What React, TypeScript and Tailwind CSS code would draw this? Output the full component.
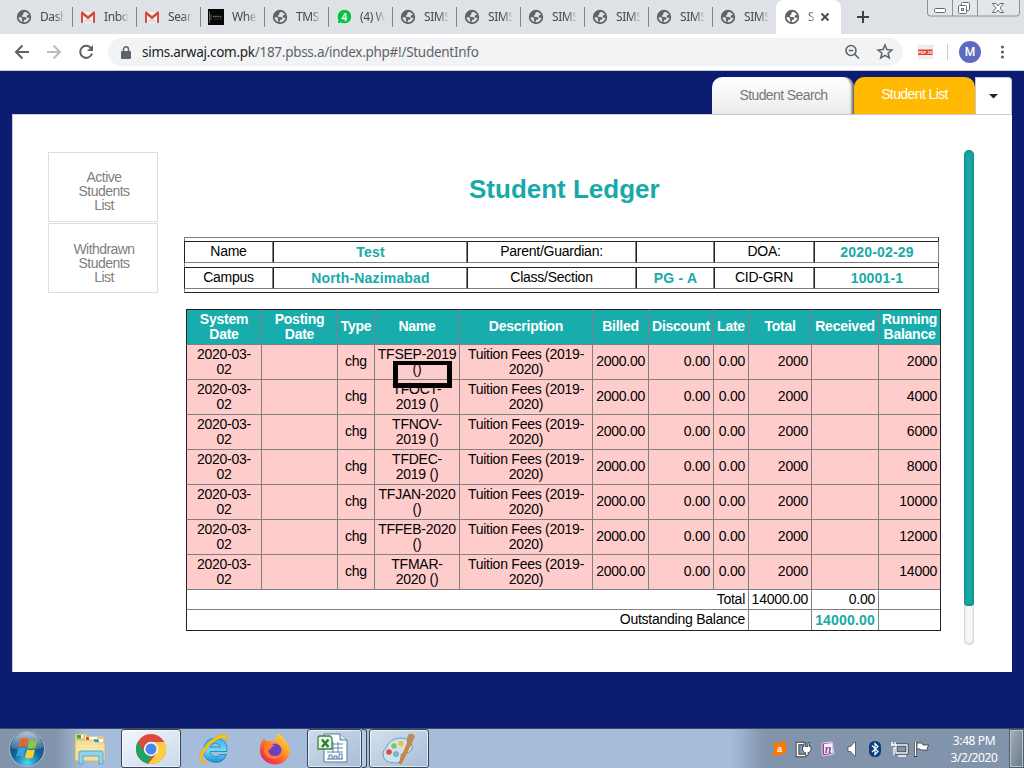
import React from "react";

const chrome = "font-['Noto_Sans','Open_Sans',sans-serif]";

function Globe({ land = "#dee1e6" }: { land?: string }) {
  return (
    <svg width="16" height="16" viewBox="0 0 16 16" className="shrink-0">
      <circle cx="8" cy="8" r="7.200" fill="#5f6368" />
      <path d="M8.800 2.700 7.200 4.200l.2 1.300-1.900 1.600 1.400.9h2.500l1.100 1.200-.7 1.200-1.800.6-.4 2.300c3.300.1 5.600-2.200 5.800-4.800l-1.300.6-1.700-1.400.6-1.500 1.900-.3C12 4.300 10.700 3 8.800 2.700Z" fill={land} />
      <path d="M2.600 8 5 8.300l1.400 1.400-.6 1.200.9 2.200C4.200 12.600 2.600 10.500 2.600 8Z" fill={land} />
    </svg>
  );
}

function Gmail() {
  return (
    <svg width="16" height="16" viewBox="0 0 16 16" className="shrink-0">
      <path d="M1 3h14v11H1Z" fill="#f2f2f2" />
      <path d="M3 13 8 8l5 5Z" fill="#dcdcdc" />
      <path d="M1 3.500V14h2V6.200l5 4 5-4V14h2V3.500c0-1-1-1.300-1.800-.7L8 7 2.800 2.800C2 2.200 1 2.500 1 3.500Z" fill="#d54b3d" />
    </svg>
  );
}

function WhatsApp() {
  return (
    <svg width="16" height="16" viewBox="0 0 16 16" className="shrink-0">
      <path d="m1 15 1-4A7.300 7.300 0 1 1 5 14Z" fill="#0dc143" stroke="#fff" strokeWidth=".8" />
      <text x="8.300" y="12" textAnchor="middle" fontSize="10" fontWeight="700" fontFamily="Liberation Sans, sans-serif" fill="#fff">4</text>
    </svg>
  );
}

function DarkThumb() {
  return (
    <svg width="16" height="16" viewBox="0 0 16 16" className="shrink-0">
      <path d="M0 0h16v16H0Z" fill="#050505" />
      <path d="M1.500 2v12M3 5v6" stroke="#777" strokeWidth=".8" />
      <path d="M5 7.500h9" stroke="#777" strokeWidth="1.500" strokeDasharray="1.500 .7" />
      <path d="M6 10h8" stroke="#444" strokeDasharray="1 .5" />
    </svg>
  );
}

const tabs = [
  { icon: "globe", text: "Dash" },
  { icon: "gmail", text: "Inbo" },
  { icon: "gmail", text: "Sear" },
  { icon: "dark", text: "Whe" },
  { icon: "globe", text: "TMS" },
  { icon: "wa", text: "(4) W" },
  { icon: "globe", text: "SIMS" },
  { icon: "globe", text: "SIMS" },
  { icon: "globe", text: "SIMS" },
  { icon: "globe", text: "SIMS" },
  { icon: "globe", text: "SIMS" },
  { icon: "globe", text: "SIMS" },
];

function TabIcon({ kind }: { kind: string }) {
  if (kind === "gmail") return <Gmail />;
  if (kind === "wa") return <WhatsApp />;
  if (kind === "dark") return <DarkThumb />;
  return <Globe />;
}

function TabStrip() {
  return (
    <div className={`flex h-[34px] bg-[#dee1e6] pl-2 text-[12px] text-[#45484c] ${chrome}`}>
      {tabs.map((t, i) => (
        <div key={i} className="flex w-16 shrink-0 items-center pl-2">
          <TabIcon kind={t.icon} />
          <div className="ml-2 w-[25px] overflow-hidden whitespace-nowrap tracking-[-0.4px] [mask-image:linear-gradient(to_right,#000_60%,transparent)]">{t.text}</div>
          {i < 11 && <div className="-mr-px ml-auto h-5 w-px bg-[#80858b]" />}
        </div>
      ))}
      <div className="flex w-[65px] shrink-0 items-center rounded-t-lg bg-white pl-2">
        <Globe land="#fff" />
        <div className="ml-2 w-[6px] overflow-hidden whitespace-nowrap [mask-image:linear-gradient(to_right,#000,#0006)]">S</div>
        <svg width="10" height="10" viewBox="0 0 10 10" className="ml-[6px]"><path d="m1.500 1.500 7 7m0-7-7 7" stroke="#45484c" strokeWidth="1.800" /></svg>
      </div>
      <div className="flex w-11 items-center justify-center">
        <svg width="14" height="14" viewBox="0 0 14 14"><path d="M7 1v12M1 7h12" stroke="#3c4043" strokeWidth="2" /></svg>
      </div>
      <svg width="94" height="18" viewBox="0 0 94 18" className="ml-[42px] shrink-0">
        <path d="M.5-1v14q0 3 3 3h86q3 0 3-3V-1" fill="#e3e6ea" stroke="#8b9096" />
        <path d="M25.500 0v16M50.500 0v16" stroke="#8b9096" />
        <rect x="7.500" y="8.500" width="11" height="4" rx="1" fill="#fff" stroke="#666b73" />
        <rect x="34.500" y="2.500" width="8" height="8" rx="1" fill="#fff" stroke="#666b73" />
        <rect x="31.500" y="5.500" width="8" height="8" rx="1" fill="#fff" stroke="#666b73" />
        <rect x="34.500" y="8.500" width="2" height="2" fill="#fff" stroke="#666b73" />
        <path d="M65.500 3.500h3.500l2 2.500 2-2.500h3.500L73 8l3.500 4.500H73L71 10l-2 2.500h-3.500L69 8Z" fill="#fff" stroke="#666b73" />
      </svg>
    </div>
  );
}

function Toolbar() {
  return (
    <div className={`flex h-[37px] items-center border-b border-[#c9ccd1] bg-white ${chrome}`}>
      <svg width="108" height="36" viewBox="0 0 108 36" className="shrink-0" fill="none" strokeWidth="2">
        <path d="M29 18H16m6.500-6.500L16 18l6.500 6.500" stroke="#5f6368" />
        <path d="M47 18h13m-6.500-6.500L60 18l-6.500 6.500" stroke="#babcbe" />
        <path d="M91 14.200A6 6 0 1 0 92 19.500" stroke="#5f6368" />
        <path d="M93 11v6h-6Z" fill="#5f6368" />
      </svg>
      <div className="flex h-7 w-[795px] shrink-0 items-center rounded-full bg-[#f1f3f4]">
        <svg width="10" height="13" viewBox="0 0 10 13" className="ml-[13px] shrink-0"><path d="M1 5h8q1 0 1 1v6q0 1-1 1H1q-1 0-1-1V6q0-1 1-1Z" fill="#5f6368" /><path d="M2.500 5.500V3.300a2.500 2.500 0 0 1 5 0v2.200" fill="none" stroke="#5f6368" strokeWidth="1.400" /></svg>
        <div className="ml-[11px] w-[698px] whitespace-nowrap text-[13.500px] tracking-[-0.28px] text-[#5f6368]"><span className="text-[#202124]">sims.arwaj.com.pk</span>/187.pbss.a/index.php#!/StudentInfo</div>
        <svg width="50" height="18" viewBox="0 0 50 18" className="ml-[4px] shrink-0" fill="none" stroke="#5f6368" strokeWidth="1.600">
          <circle cx="7" cy="7.500" r="5" /><path d="m10.500 11 4.500 4.500M4.700 7.500h4.600" />
          <path d="m41 2 1.900 4.600 5 .4-3.800 3.200 1.200 4.800L41 12.400 36.700 15l1.200-4.800L34.100 7l5-.4Z" strokeWidth="1.500" />
        </svg>
      </div>
      <svg width="121" height="36" viewBox="0 0 121 36" className="shrink-0">
        <path d="m15 11 8 1 7-1-1 14-7-1-6 1Z" fill="#eee" stroke="#ddd" strokeWidth=".6" />
        <path d="M15 15.500h14.500v5.500H15Z" fill="#e93c2d" />
        <text x="22.200" y="19.800" textAnchor="middle" fontSize="4" fontWeight="700" fill="#fff" fontFamily="Liberation Sans, sans-serif">PDF JS</text>
        <path d="M44.500 10v16" stroke="#c9ccd1" />
        <circle cx="67" cy="18" r="11" fill="#5c6bc0" />
        <text x="67" y="22.200" textAnchor="middle" fontSize="12" fontWeight="500" fill="#fff" fontFamily="Roboto, sans-serif">M</text>
        <g fill="#5f6368"><circle cx="99.500" cy="13" r="1.600" /><circle cx="99.500" cy="18" r="1.600" /><circle cx="99.500" cy="23" r="1.600" /></g>
      </svg>
    </div>
  );
}

const info = [
  ["Name", "Test", "Parent/Guardian:", "", "DOA:", "2020-02-29"],
  ["Campus", "North-Nazimabad", "Class/Section", "PG - A", "CID-GRN", "10001-1"],
];

function InfoTable() {
  return (
    <div className="ml-[172px] flex h-14 w-[755px] flex-col gap-1 border border-t-[#808080] border-r-[#222] border-b-[#222] border-l-[#808080] pt-[3px]">
      {info.map((row, r) => (
        <div key={r} className="-mx-px grid h-[22px] grid-cols-[89px_194px_169px_78px_100px_125px] text-center leading-[18px]">
          {row.map((c, i) => (
            <div key={i} className={`border border-t-[#222] border-r-[#808080] border-b-[#808080] border-l-[#222] ${i % 2 ? "pt-[1px] pl-px text-[14px] font-bold tracking-[0.18px] text-[#18a9a9]" : "text-[14px] tracking-[-0.25px] text-black"}`}>{c}</div>
          ))}
        </div>
      ))}
    </div>
  );
}

const heads = ["System Date", "Posting Date", "Type", "Name", "Description", "Billed", "Discount", "Late", "Total", "Received", "Running Balance"];
const rows = [
  ["TFSEP-2019", "()", "2000"],
  ["TFOCT-", "2019 ()", "4000"],
  ["TFNOV-", "2019 ()", "6000"],
  ["TFDEC-", "2019 ()", "8000"],
  ["TFJAN-2020", "()", "10000"],
  ["TFFEB-2020", "()", "12000"],
  ["TFMAR-", "2020 ()", "14000"],
];
const cell = "flex items-center border-t border-l border-[#808080]";

function Ledger() {
  return (
    <div className="relative mt-4 ml-[174px] w-[755px] border-r border-b border-[#222] text-[14px] leading-[15px] tracking-[-0.25px] text-black">
      <div className="grid h-[35px] grid-cols-[75px_76px_37px_85px_133px_56px_65px_35px_63px_67px_62px] bg-[#18acac] font-bold text-white">
        {heads.map((h, i) => (
          <div key={i} className="flex items-center justify-center border-t border-l border-t-[#222] border-l-[#808080] pb-px text-center first:border-l-[#222]">
            <span className={i === 0 || i === 1 ? "w-[58px]" : ""}>{h}</span>
          </div>
        ))}
      </div>
      {rows.map(([name, rest, bal]) => (
        <div key={name} className="grid h-[35px] grid-cols-[75px_76px_37px_85px_133px_56px_65px_35px_63px_67px_62px] bg-[#ffcccc]">
          <div className={`${cell} justify-center border-l-[#222] text-center`}><span>2020-03-<br />02</span></div>
          <div className={cell} />
          <div className={`${cell} justify-center pb-[2px]`}>chg</div>
          <div className={`${cell} justify-center text-center`}><span>{name}<br />{rest}</span></div>
          <div className={`${cell} justify-center text-center`}><span>Tuition Fees (2019-<br />2020)</span></div>
          <div className={`${cell} justify-end pr-[3px] pb-[2px]`}>2000.00</div>
          <div className={`${cell} justify-end pr-[3px] pb-[2px]`}>0.00</div>
          <div className={`${cell} justify-end pr-[3px] pb-[2px]`}>0.00</div>
          <div className={`${cell} justify-end pr-[3px] pb-[2px]`}>2000</div>
          <div className={cell} />
          <div className={`${cell} justify-end pr-[3px] pb-[2px]`}>{bal}</div>
        </div>
      ))}
      <div className="grid h-5 grid-cols-[562px_63px_67px_62px]">
        <div className={`${cell} justify-end border-l-[#222] pr-[3px]`}>Total</div>
        <div className={`${cell} justify-end pr-[3px]`}>14000.00</div>
        <div className={`${cell} justify-end pr-[3px]`}>0.00</div>
        <div className={cell} />
      </div>
      <div className="grid h-[21px] grid-cols-[562px_63px_67px_62px]">
        <div className={`${cell} justify-end border-l-[#222] pr-[3px] pb-[2px]`}>Outstanding Balance</div>
        <div className={cell} />
        <div className={`${cell} justify-end pr-[3px] font-bold tracking-[0.18px] text-[#18a9a9]`}>14000.00</div>
        <div className={cell} />
      </div>
      <div className="absolute top-[52px] left-[207px] h-[27px] w-[59px] border-[5px] border-t-4 border-black" />
    </div>
  );
}

function Page() {
  return (
    <div className="flex h-[657px] flex-col bg-[#0c1c70] px-3 pt-[6px]">
      <div className="flex h-[37px] shrink-0 justify-end text-[14px] tracking-[-0.6px]">
        <div className="flex w-[142px] items-center justify-center rounded-t-[10px] bg-gradient-to-b from-white to-[#ececec] pl-[1px] text-[#777] shadow-[inset_-4px_0_3px_-2px_#555]">Student Search</div>
        <div className="flex w-[121px] items-center justify-center rounded-t-[10px] bg-[#ffb900] pb-[2px] text-white">Student List</div>
        <div className="flex w-[37px] items-center justify-center rounded-tr-sm border border-b-0 border-[#c8c8c8] bg-white">
          <svg width="9" height="5" viewBox="0 0 9 5"><path d="M0 0h9L4.500 4.500Z" fill="#222" /></svg>
        </div>
      </div>
      <div className="flex h-[558px] flex-col border-t border-l border-[#ccc] bg-white">
        <div className="flex h-0">
          <div className="mt-[37px] ml-[35px] w-[110px] shrink-0 space-y-px text-center text-[14px] leading-[14px] tracking-[-0.550px] text-[#808080]">
            <div className="h-[70px] border border-[#ddd] pt-[17px] pl-[2px]">Active<br />Students<br />List</div>
            <div className="h-[70px] border border-[#ddd] pt-[18px] pl-[2px]">Withdrawn<br />Students<br />List</div>
          </div>
          <div className="mt-[35px] mr-[38px] ml-auto h-[495px] w-[10px] shrink-0 overflow-hidden rounded-full bg-[#f7f7f7] shadow-[inset_0_0_3px_#aaa]">
            <div className="h-[456px] rounded-[4px] bg-[#18a5a3] shadow-[inset_0_0_3px_#056b69]" />
          </div>
        </div>
        <h1 className="-ml-px h-[122px] pt-[56px] pl-[457px] text-[26px] leading-[36px] font-bold text-[#18a9a9]">Student Ledger</h1>
        <div className="-ml-px"><InfoTable /><Ledger /></div>
      </div>
    </div>
  );
}

function ChromeLogo() {
  return (
    <svg width="32" height="32" viewBox="0 0 32 32">
      <circle cx="16" cy="16" r="15" fill="#dd4b3e" />
      <path d="M3 8.500 9.500 19.500 16 23l-3 7.700A15 15 0 0 1 3 8.500Z" fill="#1da362" />
      <path d="M16 9h13.300A15 15 0 0 1 13.500 30.800L22 19.500Z" fill="#ffce44" />
      <circle cx="16" cy="16" r="7.200" fill="#f5f5f5" /><circle cx="16" cy="16" r="5.500" fill="#4688f1" />
    </svg>
  );
}

function Orb() {
  return (
    <svg width="38" height="38" viewBox="0 0 38 38">
      <defs>
        <radialGradient id="orb" cx=".5" cy=".9" r=".9"><stop offset="0" stopColor="#4fd6f5" /><stop offset=".45" stopColor="#14669b" /><stop offset="1" stopColor="#173b60" /></radialGradient>
        <linearGradient id="gloss" x1="0" y1="0" x2="0" y2="1"><stop offset="0" stopColor="#fff" stopOpacity=".7" /><stop offset="1" stopColor="#fff" stopOpacity=".12" /></linearGradient>
      </defs>
      <circle cx="19" cy="19" r="17.500" fill="url(#orb)" stroke="#96b5ce" strokeWidth="1.200" />
      <path d="M3 18a16 16 0 0 1 32 0q-16 4-32 0Z" fill="url(#gloss)" />
      <path d="M12.500 9.500q4-2.500 7.500-.5l-2 8q-3.500-2-7.500.3Z" fill="#ee6228" />
      <path d="M21.500 9.800q3.500 2 8-.3l-2 8q-4 2.200-8 .3Z" fill="#8cc63e" />
      <path d="M10 19q4-2.200 7.500-.2l-2 8q-4-2-7.500.2Z" fill="#39a5e0" />
      <path d="M19 19.300q4 2 8 0l-2 8q-4 2.200-8 0Z" fill="#fbd12f" />
    </svg>
  );
}

function Explorer() {
  return (
    <svg width="34" height="32" viewBox="0 0 34 32">
      <path d="M2 3q0-2 2-2h9l2 2h14q2 0 2 2v23H2Z" fill="#e5cd7c" />
      <path d="M4 2h6v3H4Z" fill="#fff" /><path d="M4 2h4v3H4Z" fill="#24b34b" /><path d="M12 4h12v3H12Z" fill="#fff" /><path d="M13 4h3v3h-3Z" fill="#df4c32" /><path d="M21 6h9v3h-9Z" fill="#fff" /><path d="M21 6h4v3h-4Z" fill="#289be0" />
      <path d="M2 7h18l2 2h10v19H2Z" fill="#f3df99" stroke="#c9ae5d" strokeWidth=".7" />
      <path d="M4 3h4v2.500H4Z" fill="#24b34b" /><path d="M13 4.500h3V7h-3Z" fill="#df4c32" /><path d="M22 6.500h8V9h-8Z" fill="#fff" /><path d="M22 6.500h4V9h-4Z" fill="#289be0" />
      <path d="M4 13h26M4 16h26" stroke="#fff0b8" />
      <path d="M6 31V20q0-2 2-2h20q2 0 2 2v11h-4v-8H10v8Z" fill="#8ed4ef" stroke="#5ba5cb" />
    </svg>
  );
}

function IE() {
  return (
    <svg width="34" height="34" viewBox="0 0 34 34" fill="none">
      <defs><linearGradient id="ie" x1="0" y1="0" x2="0" y2="1"><stop offset="0" stopColor="#36b4e8" /><stop offset=".5" stopColor="#70daf7" /><stop offset="1" stopColor="#1e8fd0" /></linearGradient></defs>
      <path d="M30 19.500H13q.8 5 5.500 5 3.500 0 4.500-2h6.500Q27 30.500 18.500 30.500 6.500 29.500 6.500 18 7.500 6.500 18.500 6 31 6.500 30 19.500ZM13.200 15H23.500q-.8-3.700-5-3.700T13.200 15Z" fill="url(#ie)" fillRule="evenodd" stroke="#1682bf" strokeWidth=".8" />
      <path d="M6.500 31Q-1 29 6 17 14 6 24 2.500q9-1.500 5 7 .500-4.500-5-3.500Q15 8.500 8 19t-.5 9.500q1 1 3 0Q8 31 6.500 31Z" fill="#f8c51d" stroke="#e5a800" strokeWidth=".7" />
    </svg>
  );
}

function Firefox() {
  return (
    <svg width="34" height="34" viewBox="0 0 34 34">
      <defs><linearGradient id="ff" x1="1" y1="0" x2=".2" y2="1"><stop offset="0" stopColor="#fff04a" /><stop offset=".4" stopColor="#ffa62b" /><stop offset=".75" stopColor="#fb4b3c" /><stop offset="1" stopColor="#e4226e" /></linearGradient></defs>
      <path d="M20 1q6 4 7 8 5 4 5 10A15 14 0 0 1 2 18Q2 11 6 6q1 3 3 3 5-1 8 1Q17 5 20 1Z" fill="url(#ff)" />
      <circle cx="17" cy="18" r="6.500" fill="#6b3fc4" />
      <path d="M6 13q6-3 11 1-4 0-4 3l-3 1q0 6 7 6 6 0 7-6 1 8-7 9-9 0-11-7Z" fill="#ff7d27" />
    </svg>
  );
}

function Excel() {
  return (
    <svg width="34" height="34" viewBox="0 0 34 34" className="-ml-[3px]">
      <path d="M8 2h16l7 6v22H8Z" fill="#fff" stroke="#55799e" /><path d="M24 2v6h7" fill="#d8e4f1" stroke="#55799e" />
      <path d="M14 12h13M14 16h13M11 20h16M17 10v11M22 10v11" stroke="#5e88b5" />
      <path d="M11 27h16M13 27v-4h3v4m2 0v-3h3v3m2 0v-5h3v5" fill="none" stroke="#4475a9" />
      <path d="M2 6q0-2 2-2h10l2 2v11H2Z" fill="#e7f4e5" stroke="#37853d" strokeWidth="1.300" />
      <path d="m6 7.500 6.500 7.500m0-7.500L6 15" stroke="#268032" strokeWidth="2.400" />
    </svg>
  );
}

function Paint() {
  return (
    <svg width="34" height="34" viewBox="0 0 34 34">
      <path d="M4 16Q7 7 18 6q10 0 12 7 1 8-7 8-5 0-4 4 1 6-5 6-13 0-13-9 0-4 3-6Z" fill="#cce3ef" stroke="#6c9bb8" />
      <circle cx="7" cy="20" r="2.800" fill="#e24938" /><circle cx="12" cy="14" r="2.700" fill="#85c34b" /><circle cx="19" cy="11.500" r="2.700" fill="#edc03d" /><circle cx="14" cy="22" r="2.500" fill="#83b8d3" stroke="#6095b5" strokeWidth=".7" />
      <path d="M26 10 17 31l2 1 10-20Z" fill="#e7852e" stroke="#b65a17" strokeWidth=".6" />
      <path d="M25 11q-1-5 2-9 4-1 6 2-1 5-5 9Z" fill="#b98a61" />
    </svg>
  );
}

function Tray() {
  return (
    <svg width="162" height="24" viewBox="0 0 162 24" className="shrink-0" fill="none">
      <path d="M2 5.500q3-.500 5 .500 3 .500 4-1.500l4-.5q-1 3.500 0 5.500l.5 4-2 4.500q-3-1.500-5.500 0l-7 .5q0-3 2-5Q4 10 2 5.500Z" fill="#ff7800" />
      <text x="8.500" y="14.500" textAnchor="middle" fontSize="9" fontWeight="700" fill="#fff" fontFamily="Liberation Sans, sans-serif">a</text>
      <path d="M33 6.500h-6.500v12h9" stroke="#303840" strokeWidth="3.500" />
      <path d="M33 6.500h-6.500v12h9" stroke="#fff" strokeWidth="1.700" />
      <path d="M31.500 9.500h1.500v-4h1.500v4h2.500v-4h1.500v4h1.500v3.500l-2 2.500H37v3h-2.500v-3h-1l-2-2.500Z" fill="#fff" stroke="#303840" strokeWidth=".8" />
      <path d="m51 6 10-1 2 12-11 2-1-3Z" fill="#8a4b93" stroke="#e9cfee" /><path d="m53 7 8-1 1 10-9 1Z" fill="#f8eff9" />
      <text x="57" y="15.500" textAnchor="middle" fontSize="12" fontStyle="italic" fontWeight="700" fill="#8a4b93" fontFamily="Liberation Serif, serif">n</text>
      <path d="M77 9.500h2.500l4-4.500h1v14h-1l-4-4.500H77Z" fill="#fff" stroke="#404951" strokeWidth=".8" />
      <rect x="98" y="4" width="12" height="16" rx="5.500" fill="#0b3c7c" /><path d="m101 8.500 6 6-3 3V6.500l3 3-6 5.500" stroke="#fff" strokeWidth="1.200" />
      <path d="M125 8h11v8h-11Z" fill="#8294ab" stroke="#303840" strokeWidth="3" /><path d="M125 8h11v8h-11Zm2 11h8M121 5v3m3-3v3m-4 0h5v3h-2v7" stroke="#fff" strokeWidth="1.400" />
      <path d="M144.500 5v15" stroke="#303840" strokeWidth="3" /><path d="M146 6h5l1 2h6l-2 3 1 2h-7l-1-1h-3Z" fill="#fff" stroke="#303840" strokeWidth=".8" /><path d="M144.500 5v14" stroke="#fff" strokeWidth="1.500" />
    </svg>
  );
}

const slot = "flex h-[39px] shrink-0 items-center justify-center rounded-[3px] border border-[#33465c] shadow-[inset_0_0_0_1px_#ffffff99]";

function Taskbar() {
  return (
    <div className={`flex h-10 items-center border-t border-[#3b4b60] bg-[linear-gradient(to_right,#8293aa_0,#8293aa_55px,#a5bddb_85px,#a5bddb_730px,#8294ab_765px)] ${chrome}`}>
      <div className="ml-2 w-[65px] shrink-0"><Orb /></div>
      <div className="w-[48px] shrink-0"><Explorer /></div>
      <div className={`${slot} w-[60px] bg-gradient-to-br from-[#f3f7fb] to-[#cad8e9]`}><ChromeLogo /></div>
      <div className="ml-4 w-[61px] shrink-0"><IE /></div>
      <div className="w-[49px] shrink-0"><Firefox /></div>
      <div className={`${slot} w-[55px] bg-gradient-to-br from-[#d0dceb] to-[#a8bdd6]`}><Excel /></div>
      <div className="h-[39px] w-[5px] shrink-0 rounded-r-[3px] border border-l-0 border-[#33465c] bg-[#b7cae1]" />
      <div className={`${slot} ml-[2px] w-[60px] bg-gradient-to-br from-[#d5e0ed] to-[#a8bdd6]`}><Paint /></div>
      <div className="ml-auto flex shrink-0 items-center">
        <Tray />
        <div className="mr-[7px] ml-[13px] w-[56px] text-center text-[12px] leading-[17px] tracking-[-0.400px] whitespace-nowrap text-white">3:48 PM<br />3/2/2020</div>
        <div className="h-[39px] w-[15px] border border-[#4f5d6d] bg-gradient-to-br from-[#a4afbd] to-[#697788] shadow-[inset_0_0_0_1px_#b7c2cf]" />
      </div>
    </div>
  );
}

export default function App() {
  return (
    <div className="h-[768px] w-[1024px] overflow-hidden font-['Liberation_Sans',Arial,sans-serif]">
      <TabStrip />
      <Toolbar />
      <Page />
      <Taskbar />
    </div>
  );
}
